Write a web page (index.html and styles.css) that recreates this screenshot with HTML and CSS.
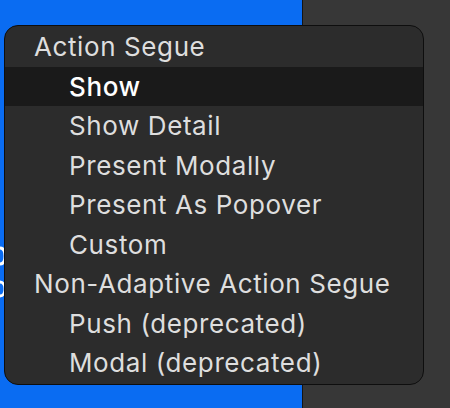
FILE: index.html
```html
<!DOCTYPE html>
<html>
<head>
<meta charset="utf-8">
<link rel="stylesheet" href="styles.css">
</head>
<body>
<div class="stage">
  <div class="blue-pane">
    <svg class="glyph" width="6" height="60" viewBox="0 0 6 60">
      <path d="M0 10 C4 10 5 14 5 18 C5 23 3 26 0 26" fill="none" stroke="#fff" stroke-width="3"/>
      <path d="M0 44 C3 44 5 47 5 51 C5 55 3 58 0 58" fill="none" stroke="#fff" stroke-width="3"/>
    </svg>
  </div>
  <div class="divider"></div>
  <div class="gray-pane"></div>
  <div class="menu">
    <div class="row header">Action Segue</div>
    <div class="row item selected">Show</div>
    <div class="row item">Show Detail</div>
    <div class="row item">Present Modally</div>
    <div class="row item">Present As Popover</div>
    <div class="row item">Custom</div>
    <div class="row header">Non-Adaptive Action Segue</div>
    <div class="row item">Push (deprecated)</div>
    <div class="row item">Modal (deprecated)</div>
  </div>
</div>
</body>
</html>
```
FILE: styles.css
```css
html, body {
  margin: 0;
  padding: 0;
  width: 450px;
  height: 408px;
  overflow: hidden;
}
.stage {
  position: relative;
  display: flex;
  width: 450px;
  height: 408px;
}
.blue-pane {
  position: relative;
  width: 302px;
  background: #0a6cf2;
}
.glyph {
  position: absolute;
  left: 0;
  top: 238px;
}
.divider {
  width: 1px;
  background: #151515;
}
.gray-pane {
  flex: 1;
  background: #373737;
}
.menu {
  position: absolute;
  left: 4px;
  top: 25px;
  width: 418px;
  height: 357px;
  padding-top: 1px;
  background: #2c2c2c;
  border: 1px solid #0e0e0e;
  border-radius: 14px;
  box-sizing: content-box;
  font-family: Inter, "Noto Sans", sans-serif;
  font-size: 26px;
  letter-spacing: 0.6px;
  color: #dedede;
  overflow: hidden;
}
.row {
  height: 39.5px;
  line-height: 40px;
  white-space: nowrap;
}
.header {
  padding-left: 29px;
}
.item {
  padding-left: 64px;
}
.selected {
  background: #1a1a1a;
  color: #ffffff;
  font-weight: 500;
}
```
